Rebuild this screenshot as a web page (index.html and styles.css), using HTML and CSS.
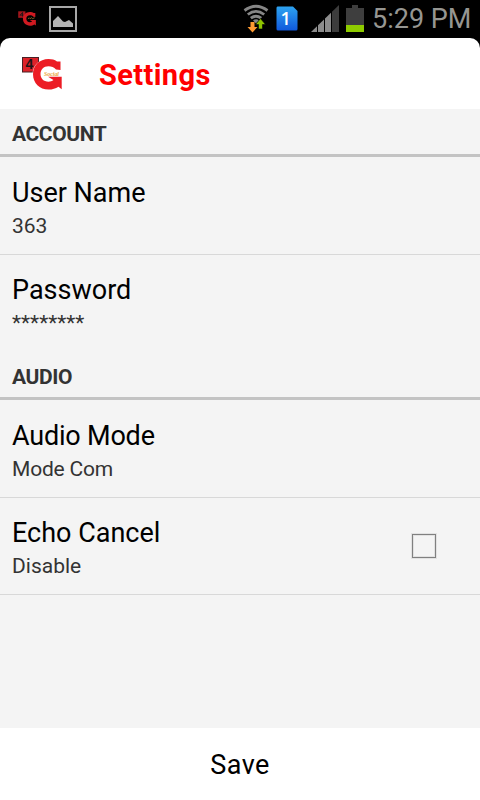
FILE: index.html
```html
<!DOCTYPE html>
<html lang="en">
<head>
  <meta charset="UTF-8">
  <meta name="viewport" content="width=device-width, initial-scale=1.0">
  <title>Settings</title>
  <link rel="stylesheet" href="styles.css">
</head>
<body>
  <div class="screen">
    <div class="status-bar">
      <svg class="status-logo" viewBox="0 0 40 33">
        <rect x="0.5" y="0.5" width="16" height="14.500" fill="#a3161c"/>
        <path d="M5 9L10 3V12M4 9H12" fill="none" stroke="#1c1517" stroke-width="2"/>
        <path d="M38.500 4.500V13L34 12.500C32 10.300 29.500 9.300 26.500 9.300C21.500 9.300 18.500 12.700 18.500 17S21.500 24.700 26.500 24.700C28.500 24.700 30 24.200 31.500 23L26 19.800H39.700V32.300L36.500 29.700C33.500 31.600 30.500 32.500 26.500 32.500C17.500 32.500 11 26 11 17.200S17.500 2 26.500 2C30 2 32.500 2.700 35 4.500Z" fill="#cf1a21"/>
        <path d="M22 17.500L25 15L27 17L30 14.500L32 17L37 15" fill="none" stroke="#b5812f" stroke-width="1.500"/>
      </svg>
      <svg class="status-picture" viewBox="0 0 28 26">
        <rect x="1" y="1" width="26" height="24" fill="none" stroke="#a8a8a8" stroke-width="2"/>
        <path d="M4 21V15L9 10L14 15.500L16 16L20 14L24 17.500V21Z" fill="#b4b4b4"/>
      </svg>
      <svg class="status-wifi" viewBox="0 0 26 28">
        <g fill="none" stroke="#868686" stroke-width="2.800">
          <path d="M1.500 6.500Q13 -2 24.500 6.500"/>
          <path d="M4.800 10.500Q13 4.300 21.200 10.500"/>
          <path d="M7.800 14.200Q13 10.200 18.200 14.200"/>
        </g>
        <path d="M10 16.500Q13 14 16 16.500L13 19.500Z" fill="#868686"/>
        <path d="M7.500 18H11.500V23H14.500L9.500 28.500L4.500 23H7.500Z" fill="#ff9a32"/>
        <path d="M15.500 25H19.500V20.500H22.500L17.500 14.500L12.500 20.500H15.500Z" fill="#8fc400" stroke="#000" stroke-width="0.600"/>
      </svg>
      <svg class="status-sim" viewBox="0 0 22 25">
        <defs>
          <linearGradient id="sim" x1="0" y1="0" x2="0" y2="1">
            <stop offset="0" stop-color="#2da3f0"/>
            <stop offset="1" stop-color="#1058dc"/>
          </linearGradient>
        </defs>
        <path d="M1.500 0.500H17L21.500 5V23Q21.500 24.500 20 24.500H2Q0.500 24.500 0.500 23V2Q0.500 0.500 1.500 0.500Z" fill="url(#sim)"/>
        <text x="4.500" y="19" font-family="Open Sans, sans-serif" font-weight="600" font-size="18" fill="#fff">1</text>
      </svg>
      <svg class="status-signal" viewBox="0 0 28 27">
        <path d="M0 27L6 21.200V27Z" fill="#8c8c8c"/>
        <path d="M7 20.200L13 14.500V27H7Z" fill="#8c8c8c"/>
        <path d="M14 13.500L20 7.700V27H14Z" fill="#8c8c8c"/>
        <path d="M21 6.700L28 0V27H21Z" fill="#3c3c3c"/>
      </svg>
      <svg class="status-battery" viewBox="0 0 18 27">
        <path d="M6 0H12V3H18V27H0V3H6Z" fill="#3e3e3e"/>
        <rect x="0" y="20" width="18" height="7" fill="#8fcc00"/>
      </svg>
      <span class="clock">5:29 PM</span>
    </div>

    <div class="header">
      <svg class="header-logo" viewBox="0 0 40 33">
        <rect x="0.5" y="0.5" width="16" height="14.500" fill="#dd2229" stroke="#4a2024"/>
        <text x="3.600" y="12.400" font-family="Liberation Sans, sans-serif" font-weight="bold" font-size="14" fill="#1c1517">4</text>
        <path d="M38.500 4.500V13L34 12.500C32 10.300 29.500 9.300 26.500 9.300C21.500 9.300 18.500 12.700 18.500 17S21.500 24.700 26.500 24.700C28.500 24.700 30 24.200 31.500 23L26 19.800H39.700V32.300L36.500 29.700C33.500 31.600 30.500 32.500 26.500 32.500C17.500 32.500 11 26 11 17.200S17.500 2 26.500 2C30 2 32.500 2.700 35 4.500Z" fill="#ec1c24" stroke="#fff" stroke-width="0.800" paint-order="stroke"/>
        <text x="22" y="18.800" font-family="Liberation Serif, serif" font-style="italic" font-weight="bold" font-size="6.500" textLength="15" lengthAdjust="spacingAndGlyphs" fill="#eba23a">Social</text>
      </svg>
      <h1>Settings</h1>
    </div>

    <div class="settings">
      <h2>ACCOUNT</h2>
      <div class="item">
        <div>
          <p class="title">User Name</p>
          <p class="summary">363</p>
        </div>
      </div>
      <div class="item last">
        <div>
          <p class="title">Password</p>
          <p class="summary">********</p>
        </div>
      </div>

      <h2>AUDIO</h2>
      <div class="item">
        <div>
          <p class="title audio-title">Audio Mode</p>
          <p class="summary audio-summary">Mode Com</p>
        </div>
      </div>
      <div class="item last bordered">
        <div>
          <p class="title">Echo Cancel</p>
          <p class="summary">Disable</p>
        </div>
        <input type="checkbox" class="checkbox" aria-label="Echo Cancel">
      </div>
    </div>

    <button class="save" type="button">Save</button>
  </div>
</body>
</html>
```
FILE: styles.css
```css
* {
  box-sizing: border-box;
}

body {
  margin: 0;
  background-color: #000;
  font-family: Roboto, sans-serif;
}

h1, h2, p {
  margin: 0;
}

.screen {
  display: flex;
  flex-direction: column;
  height: 800px;
  width: 480px;
}

/* Status bar */
.status-bar {
  height: 38px;
  display: flex;
  align-items: flex-start;
  padding-left: 18px;
}

.status-logo {
  width: 18px;
  height: 15px;
  margin-top: 11px;
}

.status-picture {
  width: 28px;
  height: 26px;
  margin: 6px 0 0 13px;
}

.status-wifi {
  width: 26px;
  height: 28px;
  margin: 4px 0 0 166px;
  overflow: visible;
}

.status-sim {
  width: 22px;
  height: 25px;
  margin: 6px 0 0 7px;
}

.status-signal {
  width: 28px;
  height: 27px;
  margin: 5px 0 0 13px;
}

.status-battery {
  width: 18px;
  height: 27px;
  margin: 5px 0 0 7px;
}

.clock {
  margin-left: 8px;
  font-size: 27px;
  line-height: 39px;
  color: #969692;
  white-space: nowrap;
}

/* Header */
.header {
  height: 71px;
  display: flex;
  align-items: center;
  padding-left: 22px;
  background-color: #fff;
  border-radius: 10px 10px 0 0;
}

.header-logo {
  width: 40px;
  height: 33px;
}

.header h1 {
  margin-left: 37px;
  padding-top: 2px;
  font-size: 29px;
  line-height: 34px;
  font-weight: bold;
  letter-spacing: 0.4px;
  color: #f00;
}

/* Settings list */
.settings {
  flex: 1;
  background-color: #f4f4f4;
}

.settings h2 {
  height: 48px;
  padding: 13px 12px 0;
  border-bottom: 3px solid #c3c3c3;
  font-size: 21px;
  line-height: 25px;
  font-weight: bold;
  letter-spacing: -0.4px;
  color: #333;
}

.item {
  height: 98px;
  display: flex;
  justify-content: space-between;
  padding: 20px 44px 0 12px;
  border-bottom: 1px solid #d8d8d8;
}

.item.last {
  height: 97px;
  padding-top: 19px;
  border-bottom: none;
}

.item.bordered {
  border-bottom: 1px solid #d8d8d8;
}

.title {
  font-size: 27px;
  line-height: 32px;
  color: #000;
}

.audio-title {
  letter-spacing: -0.2px;
}

.summary {
  margin-top: 5px;
  font-size: 21px;
  line-height: 25px;
  color: #333;
}

.audio-summary {
  letter-spacing: -0.2px;
}

.checkbox {
  appearance: none;
  width: 24px;
  height: 24px;
  margin: 17px 0 0;
  border: 1px solid #808080;
  box-shadow: 0 0 0 1px #e2e2e2, inset 0 0 0 1px #e2e2e2;
}

/* Footer */
.save {
  height: 72px;
  border: none;
  padding: 2px 0 0;
  background-color: #fff;
  font-family: inherit;
  font-size: 27px;
  letter-spacing: 0.5px;
  color: #000;
}
```
